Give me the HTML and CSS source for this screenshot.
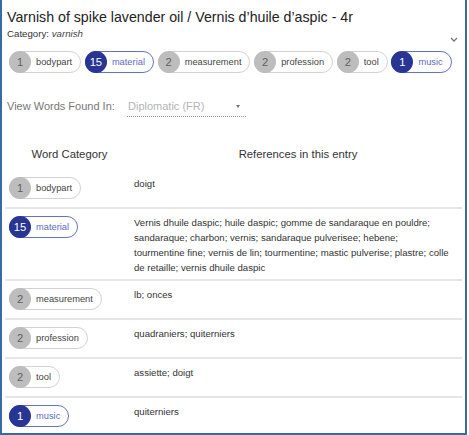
FILE: index.html
```html
<!DOCTYPE html>
<html>
<head>
<meta charset="utf-8">
<link rel="stylesheet" href="styles.css">
</head>
<body>
<div class="card">
  <h1 class="title">Varnish of spike lavender oil / Vernis d’huile d’aspic - 4r</h1>
  <div class="cat-row">
    <div class="category">Category: <em>varnish</em></div>
    <svg class="chev" width="8" height="5" viewBox="0 0 8 5"><path d="M1 1 L4 4 L7 1" fill="none" stroke="#777" stroke-width="1.3"/></svg>
  </div>
  <div class="chips">
    <span class="chip"><span class="num">1</span><span class="lbl">bodypart</span></span>
    <span class="chip sel"><span class="num">15</span><span class="lbl">material</span></span>
    <span class="chip"><span class="num">2</span><span class="lbl">measurement</span></span>
    <span class="chip"><span class="num">2</span><span class="lbl">profession</span></span>
    <span class="chip"><span class="num">2</span><span class="lbl">tool</span></span>
    <span class="chip sel"><span class="num">1</span><span class="lbl">music</span></span>
  </div>
  <div class="view-row">
    <span class="view-label">View Words Found In:</span>
    <div class="select"><span class="sel-text">Diplomatic (FR)</span><span class="caret"></span></div>
  </div>
  <div class="table">
    <div class="thead">
      <div class="c1">Word Category</div>
      <div class="c2">References in this entry</div>
    </div>
    <div class="row">
      <div class="c1"><span class="chip"><span class="num">1</span><span class="lbl">bodypart</span></span></div>
      <div class="c2">doigt</div>
    </div>
    <div class="row">
      <div class="c1"><span class="chip sel"><span class="num">15</span><span class="lbl">material</span></span></div>
      <div class="c2">Vernis dhuile daspic; huile daspic; gomme de sandaraque en pouldre;<br>sandaraque; charbon; vernis; sandaraque pulverisee; hebene;<br>tourmentine fine; vernis de lin; tourmentine; mastic pulverise; plastre; colle<br>de retaille; vernis dhuile daspic</div>
    </div>
    <div class="row">
      <div class="c1"><span class="chip"><span class="num">2</span><span class="lbl">measurement</span></span></div>
      <div class="c2">lb; onces</div>
    </div>
    <div class="row">
      <div class="c1"><span class="chip"><span class="num">2</span><span class="lbl">profession</span></span></div>
      <div class="c2">quadraniers; quiterniers</div>
    </div>
    <div class="row">
      <div class="c1"><span class="chip"><span class="num">2</span><span class="lbl">tool</span></span></div>
      <div class="c2">assiette; doigt</div>
    </div>
    <div class="row last">
      <div class="c1"><span class="chip sel"><span class="num">1</span><span class="lbl">music</span></span></div>
      <div class="c2">quiterniers</div>
    </div>
  </div>
</div>
</body>
</html>
```
FILE: styles.css
```css
* { box-sizing: border-box; }
html, body { margin: 0; padding: 0; background: #fff; }
body { font-family: "Liberation Sans", Arial, sans-serif; color: #222; }

.card {
  width: 467px;
  height: 435px;
  border: 2px solid #3b6aa0;
  border-top: none;
  padding: 0 3px;
  overflow: hidden;
}

.title {
  margin: 0;
  padding: 8px 0 0 2px;
  font-size: 14.2px;
  line-height: 18px;
  font-weight: normal;
  color: #222;
}

.cat-row {
  display: flex;
  justify-content: space-between;
  align-items: flex-end;
  margin-top: 1px;
  padding: 0 4px 0 2px;
}
.category {
  font-size: 9.7px;
  line-height: 13px;
  color: #333;
}
.category em { color: #444; }
.chev { display: block; margin-bottom: -2px; }

.chips {
  display: flex;
  margin-top: 11px;
  padding-left: 4px;
  gap: 3.7px;
}

.chip {
  display: inline-flex;
  align-items: center;
  height: 22px;
  border: 1px solid #d2d2d2;
  border-radius: 11px;
  background: #fff;
}
.chip .num {
  width: 22px;
  height: 22px;
  margin: -1px 0 -1px -1px;
  border-radius: 50%;
  background: #bdbdbd;
  color: #5f5f5f;
  font-size: 11.2px;
  display: flex;
  align-items: center;
  justify-content: center;
}
.chip .lbl {
  font-size: 9.3px;
  color: #444;
  padding: 0 8px 0 5px;
}
.chip.sel { border-color: #6572c6; }
.chip.sel .num { background: #283593; color: #fff; }
.chip.sel .lbl { color: #5c6bc0; }

.view-row {
  display: flex;
  align-items: flex-start;
  margin-top: 26px;
  padding-left: 2px;
  font-size: 11px;
  line-height: 14px;
}
.view-label { color: #777; width: 120px; }
.select {
  display: flex;
  justify-content: space-between;
  align-items: center;
  width: 119px;
  padding: 0 6px 3px 1px;
  border-bottom: 1px dotted #999;
}
.sel-text { color: #b4b4b4; }
.caret {
  width: 0;
  height: 0;
  border-left: 2.5px solid transparent;
  border-right: 2.5px solid transparent;
  border-top: 3px solid #757575;
}

.table { margin-top: 30px; }
.thead {
  display: flex;
  font-size: 11.3px;
  line-height: 14px;
  color: #333;
  padding-bottom: 9px;
}
.thead .c1 { width: 129px; text-align: center; }
.thead .c2 { flex: 1; text-align: center; }

.row {
  display: flex;
  align-items: flex-start;
  border-bottom: 2px solid #e6e6e6;
}
.row.last { border-bottom: none; }
.row .c1 {
  width: 129px;
  padding: 7px 0 8px 4px;
}
.row .c2 {
  flex: 1;
  font-size: 9.6px;
  line-height: 15px;
  color: #333;
  padding: 6px 0 4px;
}
```
